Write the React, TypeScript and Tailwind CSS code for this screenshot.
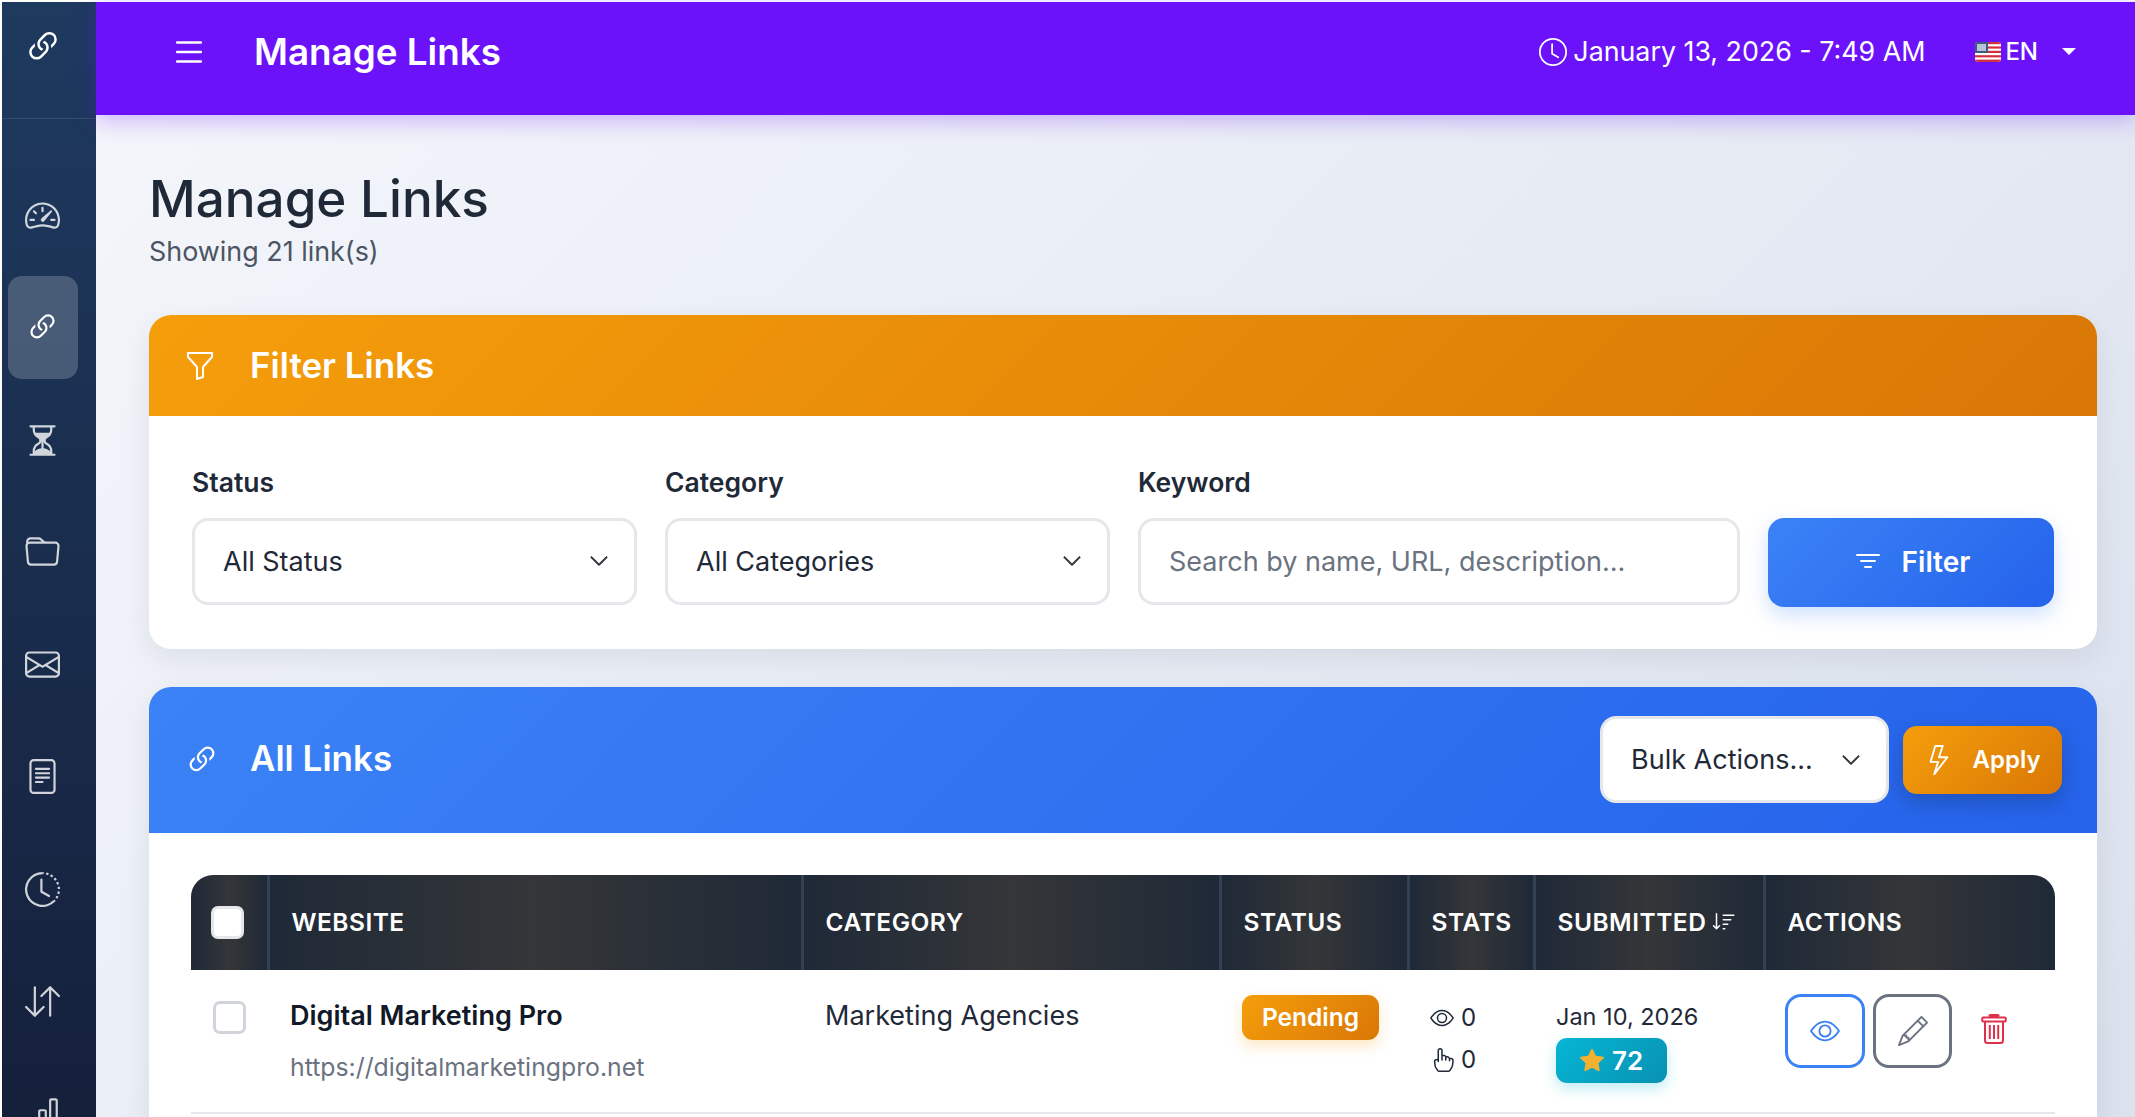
import {
  BsArrowDownUp,
  BsBarChart,
  BsChevronDown,
  BsClock,
  BsClockHistory,
  BsEnvelope,
  BsEye,
  BsFileText,
  BsFilter,
  BsFolder,
  BsFunnel,
  BsHandIndex,
  BsHourglassSplit,
  BsLightning,
  BsLink45Deg,
  BsList,
  BsPencil,
  BsSortDown,
  BsSpeedometer2,
  BsStarFill,
} from 'react-icons/bs';

const navItems = [
  { id: 'dashboard', icon: BsSpeedometer2 },
  { id: 'links', icon: BsLink45Deg, active: true },
  { id: 'pending', icon: BsHourglassSplit },
  { id: 'categories', icon: BsFolder },
  { id: 'messages', icon: BsEnvelope },
  { id: 'pages', icon: BsFileText },
  { id: 'history', icon: BsClockHistory },
  { id: 'transfers', icon: BsArrowDownUp },
  { id: 'reports', icon: BsBarChart },
];

const heading = 'font-["Inter",sans-serif]';

const thClass =
  'flex items-center h-full px-[21.5px] border-r-[3px] border-[#334155] bg-[linear-gradient(90deg,#1f2937,#343638,#1f2937)] last:border-r-0';

const gridCols = 'grid grid-cols-[79px_534px_418px_188px_126px_230px_289px]';

const FlagUS = () => (
  <svg width="26" height="20" viewBox="0 0 26 20" className="rounded-[3px]">
    <rect width="26" height="20" fill="#fff" />
    <rect y="0" width="26" height="2.2" fill="#d22f3f" />
    <rect y="4.4" width="26" height="2.2" fill="#d22f3f" />
    <rect y="8.8" width="26" height="2.2" fill="#d22f3f" />
    <rect y="13.2" width="26" height="2.2" fill="#d22f3f" />
    <rect y="17.6" width="26" height="2.4" fill="#d22f3f" />
    <rect width="13" height="11" fill="#3f5a85" />
    <rect x="2" y="2" width="9" height="7" fill="#b6c3d8" />
  </svg>
);

// lid, handle and can with three ribs
const TrashIcon = () => (
  <svg width="26" height="30" viewBox="0 0 26 30" fill="none" stroke="#e0314b" strokeWidth="2" className="mb-[3px]">
    <path d="M9 1.6h8" strokeWidth="3" strokeLinecap="round" />
    <rect x="1.2" y="3.6" width="23.6" height="4" rx="1.2" />
    <path d="M4 7.6V26.5a2.5 2.5 0 0 0 2.5 2.5h13a2.5 2.5 0 0 0 2.5-2.5V7.6" />
    <path d="M8.8 11v14M13 11v14M17.2 11v14" />
  </svg>
);

const SelectBox = ({ label, className }: { label: string; className?: string }) => (
  <div
    className={`flex items-center justify-between h-[87px] bg-white border-[3px] border-[#e5e7eb] rounded-[16px] pl-[28px] pr-[25px] text-[27px] text-[#1f2937] ${className ?? ''}`}
  >
    <span className="pt-[2px]">{label}</span>
    <BsChevronDown size={20} className="text-[#343a40] stroke-[0.8px]" />
  </div>
);

export default function App() {
  return (
    <div className='flex h-screen overflow-hidden bg-white pt-[2px] pl-[2px] font-["Inter",sans-serif]'>
      {/* Sidebar */}
      <aside className="w-[94px] shrink-0 flex flex-col bg-[linear-gradient(180deg,#1e3a5f,#15203b)]">
        <div className="h-[117px] shrink-0 border-b border-white/10 pl-[6px] pr-[18px] flex justify-center pt-[25px]">
          <BsLink45Deg size={40} className="text-white" />
        </div>
        <nav className="flex flex-col gap-[9.3px] pt-[45px] pl-[6px] pr-[18px]">
          {navItems.map(item => (
            <div
              key={item.id}
              className={`h-[103px] shrink-0 rounded-[14px] pr-[2px] flex items-center justify-center ${
                item.active ? 'bg-white/20 text-white' : 'text-white/80'
              }`}
            >
              <item.icon size={35} />
            </div>
          ))}
        </nav>
      </aside>

      <div className="flex-1 min-w-0 flex flex-col bg-[linear-gradient(135deg,#f4f6fb,#dbe2ee)]">
        {/* Top bar */}
        <header className="relative z-10 h-[113px] shrink-0 flex items-center justify-between bg-[#6b12fb] pl-[74px] pr-[59px] pb-[14px] text-white shadow-[0_5px_22px_rgba(107,18,251,0.3)]">
          <div className="flex items-center gap-[46px]">
            <BsList size={38} />
            <h1 className={`${heading} text-[36.8px] font-semibold`}>Manage Links</h1>
          </div>
          <div className="flex items-center">
            <BsClock size={28} className="mr-[6px]" />
            <span className="text-[26.8px] font-normal">January 13, 2026 - 7:49 AM</span>
            <div className="flex items-center ml-[50px]">
              <FlagUS />
              <span className="ml-[4px] text-[24px] font-medium">EN</span>
              <span className="ml-[24px] border-x-[7px] border-t-[7px] border-x-transparent border-t-white" />
            </div>
          </div>
        </header>

        {/* Content */}
        <main className="flex-1 min-h-0 pt-[53px] pl-[53px] pr-[38px]">
          <h2 className={`${heading} text-[51.2px] leading-[60px] font-medium text-[#1f2937]`}>Manage Links</h2>
          <p className="mt-[6px] text-[26.9px] leading-[34px] text-[#4b5563]">Showing 21 link(s)</p>

          {/* Filter card */}
          <section className="mt-[47px] bg-white rounded-[22px] overflow-hidden shadow-[0_10px_30px_rgba(15,23,42,0.08)]">
            <div className="h-[101px] flex items-center px-[35px] gap-[34px] text-white bg-[linear-gradient(135deg,#f59e0b,#d97706)]">
              <BsFunnel size={32} />
              <h3 className={`${heading} text-[35px] font-semibold`}>Filter Links</h3>
            </div>
            <div className="flex items-end gap-[28px] pt-[48px] pb-[44px] px-[43px]">
              <div className="w-[445px] shrink-0">
                <div className="mb-[17.5px] text-[26.5px] leading-[36px] font-semibold text-[#1f2937]">Status</div>
                <SelectBox label="All Status" />
              </div>
              <div className="w-[445px] shrink-0">
                <div className="mb-[17.5px] text-[26.5px] leading-[36px] font-semibold text-[#1f2937]">Category</div>
                <SelectBox label="All Categories" />
              </div>
              <div className="flex-1 min-w-0">
                <div className="mb-[17.5px] text-[26.5px] leading-[36px] font-semibold text-[#1f2937]">Keyword</div>
                <input
                  readOnly
                  placeholder="Search by name, URL, description..."
                  className="w-full h-[87px] bg-white border-[3px] border-[#e5e7eb] rounded-[16px] px-[28px] text-[27px] text-[#1f2937] placeholder:text-[#6b7280] outline-none"
                />
              </div>
              <button className="w-[286px] h-[89px] mb-[-2px] shrink-0 flex items-center justify-center gap-[18px] rounded-[16px] text-white text-[28px] font-semibold bg-[linear-gradient(135deg,#3b82f6,#2563eb)] shadow-[0_8px_20px_rgba(59,130,246,0.25)]">
                <BsFilter size={32} />
                Filter
              </button>
            </div>
          </section>

          {/* Links card */}
          <section className="mt-[38px] bg-white rounded-t-[22px] overflow-hidden shadow-[0_10px_30px_rgba(15,23,42,0.08)]">
            <div className="h-[146px] flex items-center px-[35px] text-white bg-[linear-gradient(135deg,#3b82f6,#2563eb)]">
              <BsLink45Deg size={36} />
              <h3 className={`${heading} ml-[30px] pb-[2px] text-[35px] font-semibold`}>All Links</h3>
              <div className="ml-auto flex items-center gap-[14px]">
                <SelectBox label="Bulk Actions..." className="w-[289px]" />
                <button className="w-[159px] h-[68px] flex items-center justify-center gap-[18px] rounded-[14px] text-white text-[24px] font-semibold bg-[linear-gradient(135deg,#f59e0b,#d97706)] shadow-[0_8px_20px_rgba(15,23,42,0.25)]">
                  <BsLightning size={30} />
                  Apply
                </button>
              </div>
            </div>

            <div className="pt-[42px] px-[42px] pb-[40px]">
              {/* Table header */}
              <div className={`${gridCols} h-[95px] rounded-t-[22px] overflow-hidden text-white text-[24.5px] font-semibold tracking-[0.5px]`}>
                <div className={`${thClass} justify-center !pl-0 !pr-[3px]`}>
                  <span className="w-[33px] h-[33px] rounded-[7px] bg-white border-[3px] border-[#e5e7eb]" />
                </div>
                <div className={thClass}>WEBSITE</div>
                <div className={thClass}>CATEGORY</div>
                <div className={thClass}>STATUS</div>
                <div className={thClass}>STATS</div>
                <div className={thClass}>
                  SUBMITTED
                  <BsSortDown size={24} className="ml-[6px]" />
                </div>
                <div className={thClass}>ACTIONS</div>
              </div>

              {/* Row */}
              <div className={`${gridCols} h-[144px] border-b-2 border-[#e5e7eb] text-[27px] text-[#1f2937]`}>
                <div className="flex justify-center pt-[31px] pr-[3px]">
                  <span className="w-[33px] h-[33px] rounded-[7px] bg-white border-[3px] border-[#d1d5db]" />
                </div>
                <div className="pl-[20px] pt-[28px]">
                  <div className="leading-[36px] font-semibold text-[#111827]">Digital Marketing Pro</div>
                  <div className="mt-[15px] leading-[36px] text-[24.8px] text-[#6b7280]">https://digitalmarketingpro.net</div>
                </div>
                <div className="pl-[21px] pt-[28px] leading-[36px]">Marketing Agencies</div>
                <div className="pl-[20px] pt-[25px]">
                  <span className="inline-flex items-center justify-center w-[137px] h-[45px] rounded-[11px] text-white text-[24.5px] font-semibold bg-[linear-gradient(135deg,#f59e0b,#d97706)] shadow-[0_6px_14px_rgba(245,158,11,0.25)]">
                    Pending
                  </span>
                </div>
                <div className="pl-[20px] pt-[30px] text-[24px]">
                  <div className="flex items-center h-[36px] gap-[7px]">
                    <BsEye size={24} />0
                  </div>
                  <div className="flex items-center h-[36px] mt-[6px] gap-[7px]">
                    <BsHandIndex size={24} />0
                  </div>
                </div>
                <div className="pl-[20px] pt-[31px]">
                  <div className="leading-[32px] text-[23.5px]">Jan 10, 2026</div>
                  <span className="mt-[5px] inline-flex items-center justify-center gap-[8px] w-[111px] h-[45px] rounded-[11px] text-white text-[26px] font-semibold bg-[linear-gradient(135deg,#06b6d4,#0891b2)] shadow-[0_6px_14px_rgba(6,182,212,0.25)]">
                    <BsStarFill size={24} className="text-[#f0b030]" />
                    72
                  </span>
                </div>
                <div className="flex items-start pl-[19px] pt-[24px] gap-[8px]">
                  <button className="w-[80px] h-[74px] flex items-center justify-center rounded-[16px] border-[3px] border-[#3b82f6] text-[#3b82f6]">
                    <BsEye size={30} />
                  </button>
                  <button className="w-[79px] h-[74px] flex items-center justify-center rounded-[16px] border-[3px] border-[#6b7280] text-[#6b7280]">
                    <BsPencil size={30} />
                  </button>
                  <button className="w-[68px] h-[74px] flex items-center justify-center">
                    <TrashIcon />
                  </button>
                </div>
              </div>
            </div>
          </section>
        </main>
      </div>
    </div>
  );
}
